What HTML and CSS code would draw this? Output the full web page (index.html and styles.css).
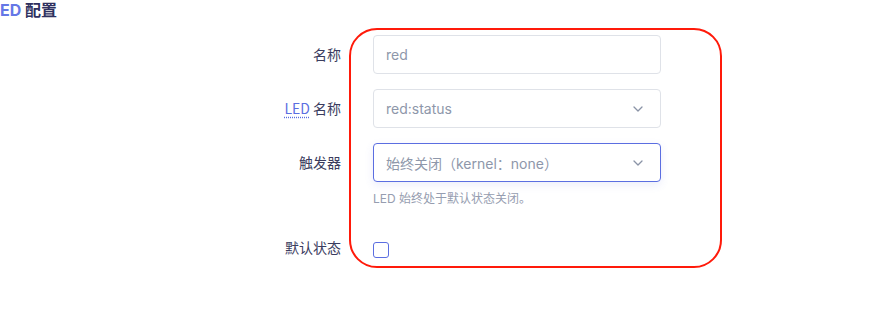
FILE: index.html
```html
<!DOCTYPE html>
<html lang="zh">
<head>
<meta charset="utf-8">
<link rel="stylesheet" href="styles.css">
</head>
<body>
<div class="page">
  <h3 class="title"><abbr class="abbr">LED</abbr> 配置</h3>
  <div class="form">
    <div class="highlight"></div>
    <div class="row">
      <label class="label">名称</label>
      <div class="control">
        <div class="input">red</div>
      </div>
    </div>
    <div class="row">
      <label class="label"><abbr class="abbr">LED</abbr> 名称</label>
      <div class="control">
        <div class="input select">red:status
          <svg class="chev" width="10" height="6" viewBox="0 0 10 6"><path d="M1 1l4 4 4-4" fill="none" stroke="#8a93a6" stroke-width="1.3" stroke-linecap="round" stroke-linejoin="round"/></svg>
        </div>
      </div>
    </div>
    <div class="row">
      <label class="label">触发器</label>
      <div class="control">
        <div class="input select focus">始终关闭（kernel：none）
          <svg class="chev" width="10" height="6" viewBox="0 0 10 6"><path d="M1 1l4 4 4-4" fill="none" stroke="#8a93a6" stroke-width="1.3" stroke-linecap="round" stroke-linejoin="round"/></svg>
        </div>
        <div class="help">LED 始终处于默认状态关闭。</div>
      </div>
    </div>
    <div class="row row-check">
      <label class="label">默认状态</label>
      <div class="control">
        <span class="checkbox"></span>
      </div>
    </div>
  </div>
</div>
</body>
</html>
```
FILE: styles.css
```css
* { box-sizing: border-box; }
html, body { margin: 0; padding: 0; background: #fff; }
body {
  font-family: "Inter", "Noto Sans CJK SC", sans-serif;
  color: #3a3c5e;
  width: 890px;
  height: 330px;
  overflow: hidden;
}
.page { position: relative; }
.title {
  margin: 0 0 0 -9px;
  height: 20px;
  font-size: 16px;
  font-weight: 700;
  line-height: 20px;
  color: #2f3160;
}
.abbr {
  color: #5b6ee1;
  text-decoration: underline dotted;
  text-underline-offset: 3px;
}
.title .abbr { text-decoration: none; color: #6577e6; }
.form {
  position: relative;
  padding-top: 15px;
  display: flex;
  flex-direction: column;
  gap: 15px;
}
.highlight {
  position: absolute;
  left: 349px;
  top: 8px;
  width: 373px;
  height: 240px;
  border: 2px solid #ff1a0a;
  border-radius: 28px;
  pointer-events: none;
}
.row {
  display: grid;
  grid-template-columns: 341px 288px;
  column-gap: 32px;
  align-items: start;
}
.label {
  text-align: right;
  font-size: 14px;
  line-height: 38px;
  color: #3a3c5e;
  font-family: "Noto Sans CJK SC", "Inter", sans-serif;
}
.control { display: flex; flex-direction: column; }
.input {
  height: 39px;
  border: 1px solid #dfe2e8;
  border-radius: 4px;
  padding: 0 12px;
  display: flex;
  align-items: center;
  justify-content: space-between;
  font-size: 14px;
  color: #8e97aa;
  background: #fff;
}
.input.focus {
  border-color: #5b6ee1;
  box-shadow: 0 3px 8px rgba(91, 110, 225, 0.12);
}
.chev { margin-right: 5px; }
.help {
  margin-top: 11px;
  font-size: 12px;
  line-height: 12px;
  color: #969db0;
}
.row-check { margin-top: 17px; }
.row-check .label { line-height: 20px; }
.row-check .control { padding-top: 5px; }
.checkbox {
  width: 16px;
  height: 16px;
  border: 1px solid #5b6ee1;
  border-radius: 3px;
  display: block;
}
```
